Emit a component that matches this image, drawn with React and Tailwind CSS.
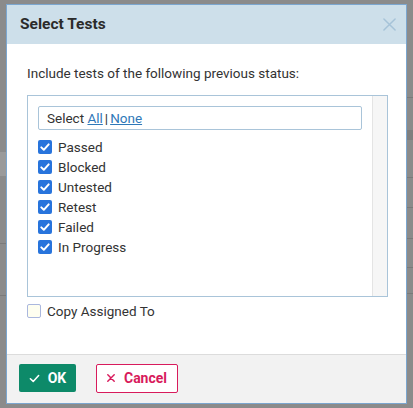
import { useState } from 'react'

const statuses = ['Passed', 'Blocked', 'Untested', 'Retest', 'Failed', 'In Progress']

function CheckIcon({ className }) {
  return (
    <svg viewBox="0 0 14 14" className={className} fill="none">
      <path d="M3.3 7.4 5.8 9.8 10.7 4.4" stroke="white" strokeWidth="2" strokeLinecap="round" strokeLinejoin="round" />
    </svg>
  )
}

function BlueCheckbox({ checked, onClick }) {
  return (
    <button
      onClick={onClick}
      className={`w-[14px] h-[14px] rounded-[2px] flex items-center justify-center flex-shrink-0 ${checked ? 'bg-[#2874dc]' : 'bg-white border border-[#9fb3cc]'}`}
    >
      {checked && <CheckIcon className="w-[14px] h-[14px]" />}
    </button>
  )
}

export default function App() {
  const [checked, setChecked] = useState(statuses.map(() => true))
  const [copyAssigned, setCopyAssigned] = useState(false)

  const toggle = i => setChecked(c => c.map((v, j) => (j === i ? !v : v)))

  return (
    <div className="relative w-[413px] h-[408px] overflow-hidden bg-[#8b8b8b] font-['Roboto',sans-serif] text-[13.5px] text-[#333]">
      {/* background page hints */}
      <div className="absolute left-0 top-[152px] w-[7px] h-[24px] bg-[#9a9a9a]" />
      <div className="absolute left-0 top-[243px] w-[7px] border-t border-[#7a7a7a]" />
      <div className="absolute left-0 top-[295px] w-[7px] border-t border-[#7a7a7a]" />
      <div className="absolute right-0 top-[97px] w-[7px] border-t border-[#7a7a7a]" />
      <div className="absolute right-0 top-[130px] w-[7px] h-[10px] bg-[#7f7f7f]" />
      <div className="absolute right-0 top-[177px] w-[7px] border-t border-[#7a7a7a]" />
      <div className="absolute right-0 top-[207px] w-[7px] border-t border-[#7a7a7a]" />
      <div className="absolute right-0 top-[238px] w-[7px] border-t border-[#7a7a7a]" />
      <div className="absolute right-0 top-[267px] w-[7px] border-t border-[#7a7a7a]" />
      <div className="absolute right-0 top-[293px] w-[7px] border-t border-[#7a7a7a]" />

      {/* dialog */}
      <div className="absolute left-[6px] top-[4px] w-[401px] h-[400px] border border-[#7ba6cf] bg-white flex flex-col">
        <div className="h-[39px] bg-[#cddfea] flex items-center justify-between pl-[13px] pr-[10px]">
          <span className="text-[15.5px] font-bold text-[#2b2b2b]">Select Tests</span>
          <svg viewBox="0 0 14 14" className="w-[13px] h-[13px]" fill="none">
            <path d="M1 1 13 13M13 1 1 13" stroke="#a6c3d8" strokeWidth="1.6" strokeLinecap="round" />
          </svg>
        </div>

        <div className="flex-1 pt-[21px] pl-[20px]">
          <p className="leading-[16px]">Include tests of the following previous status:</p>

          <div className="mt-[14px] w-[361px] h-[202px] border border-[#a9c4d9] flex">
            <div className="flex-1 pl-[10px] pt-[10px]">
              <div className="w-[324px] h-[24px] border border-[#a9c4d9] rounded-[2px] flex items-center pl-[8px]">
                Select&nbsp;
                <a href="#" className="text-[#2f78b8] underline">All</a>
                <span className="mx-[2px]">|</span>
                <a href="#" className="text-[#2f78b8] underline">None</a>
              </div>
              <div className="mt-[7px] flex flex-col">
                {statuses.map((s, i) => (
                  <label key={s} className="h-[20px] flex items-center gap-[6px]">
                    <BlueCheckbox checked={checked[i]} onClick={() => toggle(i)} />
                    <span>{s}</span>
                  </label>
                ))}
              </div>
            </div>
            <div className="w-[15px] bg-[#f6f6f6] border-l border-[#e4e4e4]" />
          </div>

          <label className="mt-[6px] flex items-center gap-[6px] h-[16px]">
            <button
              onClick={() => setCopyAssigned(v => !v)}
              className={`w-[14px] h-[14px] rounded-[2px] border flex items-center justify-center ${copyAssigned ? 'bg-[#2874dc] border-[#2874dc]' : 'bg-[#fefef0] border-[#aab7de]'}`}
            >
              {copyAssigned && <CheckIcon className="w-[14px] h-[14px]" />}
            </button>
            <span>Copy Assigned To</span>
          </label>
        </div>

        <div className="h-[49px] bg-[#f2f2f2] border-t border-[#dcdcdc] flex items-center gap-[20px] pl-[12px] pb-[2px]">
          <button className="h-[28px] w-[57px] bg-[#0d8a69] rounded-[2px] text-white font-bold text-[14px] flex items-center justify-center gap-[8px]">
            <svg viewBox="0 0 12 12" className="w-[11px] h-[11px]" fill="none">
              <path d="M1.5 6.3 4.6 9.2 10.5 2.8" stroke="white" strokeWidth="1.7" strokeLinecap="round" strokeLinejoin="round" />
            </svg>
            OK
          </button>
          <button className="h-[29px] w-[82px] bg-white border border-[#d81b5c] rounded-[2px] text-[#d81b5c] font-bold text-[14px] flex items-center justify-center gap-[9px]">
            <svg viewBox="0 0 10 10" className="w-[8px] h-[8px]" fill="none">
              <path d="M1 1 9 9M9 1 1 9" stroke="#d81b5c" strokeWidth="1.8" strokeLinecap="round" />
            </svg>
            Cancel
          </button>
        </div>
      </div>
    </div>
  )
}
